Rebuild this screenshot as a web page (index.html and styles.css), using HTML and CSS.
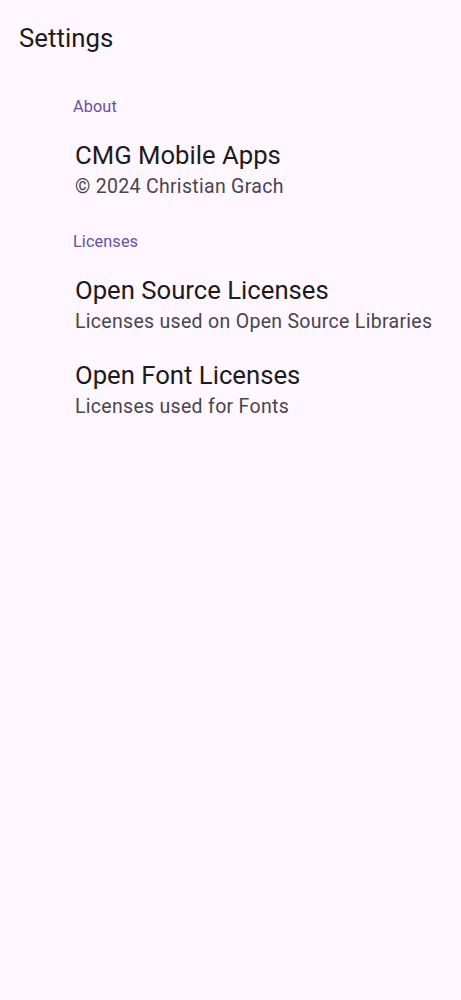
FILE: index.html
```html
<!DOCTYPE html>
<html>
<head>
<meta charset="utf-8">
<link rel="stylesheet" href="styles.css">
</head>
<body>
<header class="topbar"><h1 class="title">Settings</h1></header>
<main class="list">
  <section class="group">
    <div class="group-header">About</div>
    <div class="item">
      <div class="item-title">CMG Mobile Apps</div>
      <div class="item-sub">© 2024 Christian Grach</div>
    </div>
  </section>
  <section class="group">
    <div class="group-header">Licenses</div>
    <div class="item">
      <div class="item-title">Open Source Licenses</div>
      <div class="item-sub">Licenses used on Open Source Libraries</div>
    </div>
    <div class="item">
      <div class="item-title">Open Font Licenses</div>
      <div class="item-sub">Licenses used for Fonts</div>
    </div>
  </section>
</main>
</body>
</html>
```
FILE: styles.css
```css
html, body {
  margin: 0;
  padding: 0;
  background: #fef7ff;
  font-family: Roboto, "Noto Sans", sans-serif;
  color: #1d1b20;
}
body { height: 1000px; }
.topbar {
  height: 75px;
  display: flex;
  align-items: center;
  padding-left: 19px;
}
.title {
  margin: 0;
  font-size: 25.8px;
  font-weight: 400;
  line-height: 32px;
}
.list { display: flex; flex-direction: column; }
.group { display: flex; flex-direction: column; }
.group-header {
  padding-left: 73px;
  color: #6750a4;
  font-size: 16.3px;
  line-height: 24px;
  letter-spacing: 0.1px;
  padding-top: 19.5px;
  padding-bottom: 6.5px;
}
.group + .group .group-header { padding-top: 20px; }
.item {
  padding-left: 75px;
  padding-top: 13.5px;
  padding-bottom: 9.5px;
}
.item-title {
  font-size: 25.7px;
  line-height: 33px;
}
.item-sub {
  font-size: 19.5px;
  line-height: 29px;
  letter-spacing: 0.3px;
  color: #49454f;
}
```
